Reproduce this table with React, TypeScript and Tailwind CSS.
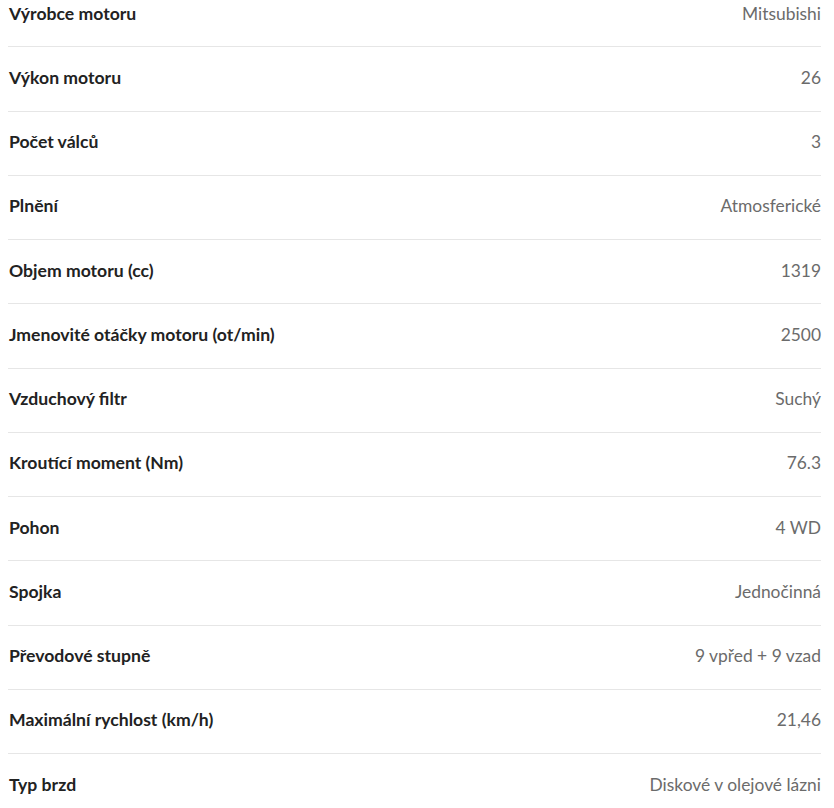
const specs = [
  { label: "Výrobce motoru", value: "Mitsubishi" },
  { label: "Výkon motoru", value: "26" },
  { label: "Počet válců", value: "3" },
  { label: "Plnění", value: "Atmosferické" },
  { label: "Objem motoru (cc)", value: "1319" },
  { label: "Jmenovité otáčky motoru (ot/min)", value: "2500" },
  { label: "Vzduchový filtr", value: "Suchý" },
  { label: "Kroutící moment (Nm)", value: "76.3" },
  { label: "Pohon", value: "4 WD" },
  { label: "Spojka", value: "Jednočinná" },
  { label: "Převodové stupně", value: "9 vpřed + 9 vzad" },
  { label: "Maximální rychlost (km/h)", value: "21,46" },
  { label: "Typ brzd", value: "Diskové v olejové lázni" },
];

export default function App() {
  return (
    <div className="h-[808px] overflow-hidden bg-white pl-2 pr-[13px] font-['Lato','Liberation_Sans',sans-serif] leading-6">
      <ul className="-mt-[17px]">
        {specs.map((s) => (
          <li
            key={s.label}
            className="flex items-center justify-between border-b border-[#e6e6e6] pt-[18.635px] pb-[20.635px] pl-px"
          >
            <span className="text-[17.6px] font-bold text-[#222]">{s.label}</span>
            <span className="text-[17.4px] text-[#6b6b6b]">{s.value}</span>
          </li>
        ))}
      </ul>
    </div>
  );
}
